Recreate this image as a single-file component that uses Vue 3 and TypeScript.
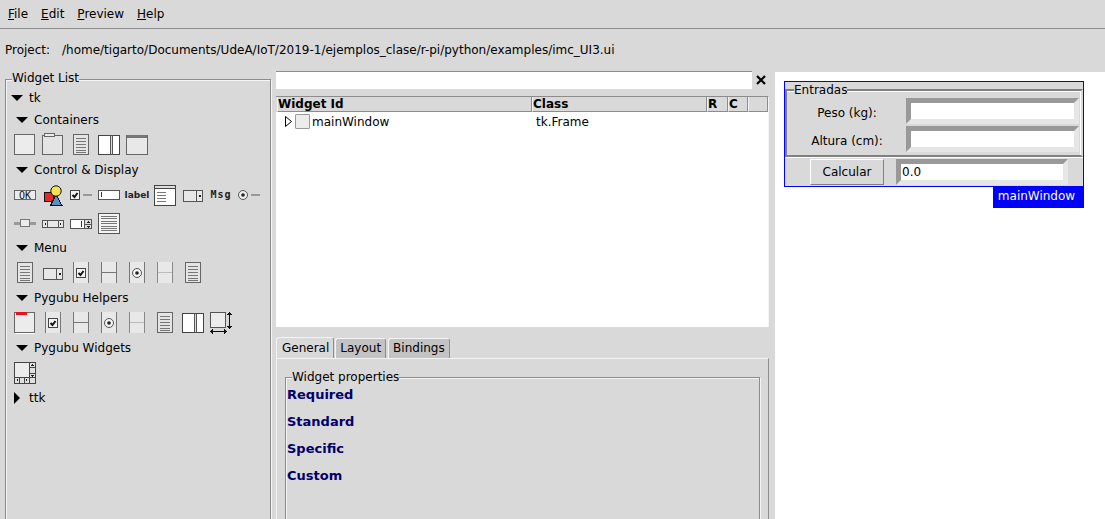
<template>
  <div class="app">
    <svg class="defs" aria-hidden="true">
      <defs>
        <symbol id="i-frame" viewBox="0 0 28 28">
          <rect x="3.5" y="4.5" width="20" height="20" rx="1" fill="#ececec" stroke="#666" />
        </symbol>
        <symbol id="i-labelframe" viewBox="0 0 28 28">
          <rect x="3.5" y="5.5" width="20" height="19" rx="1" fill="#e4e4e4" stroke="#666" />
          <rect x="5.5" y="3.5" width="10" height="3" fill="#ececec" stroke="#666" />
        </symbol>
        <symbol id="i-list" viewBox="0 0 28 28">
          <rect x="6.5" y="4.5" width="15" height="20" rx="1" fill="#e4e4e4" stroke="#666" />
          <path d="M9 8.5h10M9 11.5h10M9 14.5h10M9 17.5h10M9 20.5h10M9 22.5h10" stroke="#777" />
        </symbol>
        <symbol id="i-paned" viewBox="0 0 28 28">
          <rect x="3.5" y="5.5" width="21" height="19" rx="1" fill="#fff" stroke="#444" />
          <rect x="15" y="6" width="3" height="18" fill="#ddd" />
          <path d="M15.5 5v20M17.5 5v20" stroke="#555" />
        </symbol>
        <symbol id="i-toplevel" viewBox="0 0 28 28">
          <rect x="3.5" y="5.5" width="21" height="19" rx="1" fill="#e8e8e8" stroke="#666" />
          <rect x="4" y="5" width="20" height="3" fill="#777" />
        </symbol>
        <symbol id="i-button" viewBox="0 0 28 28">
          <rect x="3.5" y="10.5" width="21" height="9" rx="1" fill="#ececec" stroke="#666" />
          <text x="14" y="18.5" text-anchor="middle" class="glyph-mono">OK</text>
        </symbol>
        <symbol id="i-canvas" viewBox="0 0 28 28">
          <rect x="5.5" y="12.5" width="9" height="9" fill="#e8262a" stroke="#111" />
          <path d="M17 14.5L11.5 25.5H23Z" fill="#5f8fc0" stroke="#111" />
          <circle cx="17" cy="11" r="5.2" fill="#f5e34a" stroke="#111" class="round" />
        </symbol>
        <symbol id="i-check" viewBox="0 0 28 28">
          <rect x="3.5" y="10.5" width="9" height="9" rx="1" fill="#f2f2f2" stroke="#444" />
          <path d="M5.5 15l2 2 3-4" fill="none" stroke="#111" stroke-width="2" class="round" />
          <path d="M16 15h9" stroke="#999" stroke-width="2" />
        </symbol>
        <symbol id="i-entry" viewBox="0 0 28 28">
          <rect x="3.5" y="10.5" width="21" height="9" rx="1" fill="#fff" stroke="#555" />
          <path d="M6.5 12v5" stroke="#333" />
        </symbol>
        <symbol id="i-label" viewBox="0 0 28 28">
          <text x="14" y="18" text-anchor="middle" class="glyph-label">label</text>
        </symbol>
        <symbol id="i-text" viewBox="0 0 28 28">
          <rect x="3.5" y="5.5" width="21" height="20" rx="1" fill="#fff" stroke="#444" />
          <path d="M4 8.5h20" stroke="#444" />
          <rect x="4" y="6" width="20" height="2" fill="#ddd" />
          <path d="M6 12.5h9M6 15.5h9M6 18.5h9M6 21.5h9" stroke="#777" />
        </symbol>
        <symbol id="i-menubutton" viewBox="0 0 28 28">
          <rect x="4.5" y="10.5" width="19" height="11" rx="1" fill="#e8e8e8" stroke="#555" />
          <path d="M17.5 11v10" stroke="#555" />
          <rect x="20" y="15" width="2" height="2" fill="#222" />
        </symbol>
        <symbol id="i-msg" viewBox="0 0 28 28">
          <text x="14" y="18" text-anchor="middle" class="glyph-msg">Msg</text>
        </symbol>
        <symbol id="i-radio" viewBox="0 0 28 28">
          <circle cx="8" cy="15" r="4.5" fill="#eee" stroke="#555" class="round" />
          <circle cx="8" cy="15" r="1.8" fill="#222" class="round" />
          <path d="M16 15h9" stroke="#999" stroke-width="2" />
        </symbol>
        <symbol id="i-scale" viewBox="0 0 28 28">
          <path d="M3 15h22" stroke="#999" stroke-width="3" />
          <rect x="9.5" y="11.5" width="9" height="7" rx="1" fill="#ececec" stroke="#777" />
        </symbol>
        <symbol id="i-scrollbar" viewBox="0 0 28 28">
          <rect x="3.5" y="12.5" width="21" height="7" rx="1" fill="#e8e8e8" stroke="#555" />
          <path d="M8.5 13v6M19.5 13v6" stroke="#555" />
          <path d="M7 14.5v3L5.5 16ZM21 14.5v3L22.5 16Z" fill="#222" />
        </symbol>
        <symbol id="i-spinbox" viewBox="0 0 28 28">
          <rect x="3.5" y="11.5" width="21" height="9" rx="1" fill="#fff" stroke="#555" />
          <rect x="17" y="12" width="7" height="8" fill="#ddd" />
          <path d="M14.5 13v6" stroke="#333" />
          <path d="M17.5 12v8M18 16.5h6" stroke="#555" />
          <path d="M19 15h4l-2-2ZM19 18h4l-2 2Z" fill="#222" />
        </symbol>
        <symbol id="i-textlines" viewBox="0 0 28 28">
          <rect x="3.5" y="5.5" width="21" height="20" rx="1" fill="#f4f4f4" stroke="#555" />
          <path d="M6 8.5h16M6 10.5h16M6 13.5h16M6 15.5h16M6 18.5h16M6 20.5h16M6 22.5h16" stroke="#777" />
        </symbol>
        <symbol id="i-menucheck" viewBox="0 0 28 28">
          <rect x="6" y="4" width="16" height="21" fill="#e8e8e8" />
          <path d="M6.5 4v21M21.5 4v21" stroke="#777" />
          <rect x="9.5" y="10.5" width="9" height="9" rx="1" fill="#f4f4f4" stroke="#444" />
          <path d="M11.5 15l2 2 3-4" fill="none" stroke="#111" stroke-width="2" class="round" />
        </symbol>
        <symbol id="i-menusep" viewBox="0 0 28 28">
          <rect x="6" y="4" width="16" height="21" fill="#e8e8e8" />
          <path d="M6.5 4v21M21.5 4v21" stroke="#777" />
          <path d="M7 14.5h14" stroke="#777" />
        </symbol>
        <symbol id="i-menuradio" viewBox="0 0 28 28">
          <rect x="6" y="4" width="16" height="21" fill="#e8e8e8" />
          <path d="M6.5 4v21M21.5 4v21" stroke="#777" />
          <circle cx="14" cy="15" r="4.5" fill="#f4f4f4" stroke="#555" class="round" />
          <circle cx="14" cy="15" r="1.8" fill="#222" class="round" />
        </symbol>
        <symbol id="i-menusep2" viewBox="0 0 28 28">
          <rect x="6" y="4" width="16" height="21" fill="#e8e8e8" />
          <path d="M6.5 4v21M21.5 4v21" stroke="#888" />
          <path d="M7 14.5h14" stroke="#bbb" />
        </symbol>
        <symbol id="i-redframe" viewBox="0 0 28 28">
          <rect x="3.5" y="4.5" width="20" height="20" rx="1" fill="#ececec" stroke="#666" />
          <path d="M4 25.5h20" stroke="#fff" />
          <rect x="5" y="4" width="11" height="3" fill="#e8121c" />
        </symbol>
        <symbol id="i-sizegrip" viewBox="0 0 28 28">
          <rect x="3.5" y="4.5" width="15" height="15" rx="1" fill="#ececec" stroke="#555" />
          <path d="M22.5 5v15M20.5 7l2-2 2 2M20.5 18l2 2 2-2M4 23.5h15M6 21.5l-2 2 2 2M17 21.5l2 2-2 2" fill="none" stroke="#111" />
        </symbol>
        <symbol id="i-scrolled" viewBox="0 0 28 28">
          <rect x="3.5" y="4.5" width="21" height="21" fill="#ececec" stroke="#444" />
          <rect x="18" y="5" width="6" height="20" fill="#e0e0e0" />
          <rect x="4" y="19" width="20" height="6" fill="#e0e0e0" />
          <path d="M18.5 5v20M4 19.5h20M18 9.5h6M18 15.5h6M8.5 20v5M13.5 20v5" stroke="#444" />
          <path d="M19.5 8h4l-2-2ZM19.5 17h4l-2 2ZM7 20.5v3L5 22ZM15 20.5v3L17 22Z" fill="#222" />
        </symbol>
      </defs>
    </svg>

    <nav class="menubar">
      <span v-for="item in menus" :key="item" class="menu-item"><u>{{ item[0] }}</u>{{ item.slice(1) }}</span>
    </nav>

    <div class="project">
      <span class="project-label">Project:</span>
      <span>/home/tigarto/Documents/UdeA/IoT/2019-1/ejemplos_clase/r-pi/python/examples/imc_UI3.ui</span>
    </div>

    <main class="workspace">
      <fieldset class="groove widget-list">
        <legend>Widget List</legend>
        <div class="section top"><i class="arrow-down"></i>tk</div>
        <template v-for="group in palette" :key="group.label">
          <div class="section sub"><i class="arrow-down"></i>{{ group.label }}</div>
          <div v-for="(row, r) in group.rows" :key="r" class="icon-row">
            <svg v-for="(icon, n) in row" :key="n" class="icon" width="28" height="28">
              <use :href="`#i-${icon}`" />
            </svg>
          </div>
        </template>
        <div class="section top last"><i class="arrow-right"></i>ttk</div>
      </fieldset>

      <section class="center">
        <div class="search">
          <input class="search-input" type="text" />
          <svg class="close" width="10" height="10" viewBox="0 0 10 10">
            <path d="M1 1l8 8M9 1l-8 8" stroke="#000" stroke-width="2.2" />
          </svg>
        </div>

        <div class="tree">
          <div class="tree-head">
            <span v-for="col in columns" :key="col" class="tree-col">{{ col }}</span>
          </div>
          <div class="tree-row">
            <svg class="tree-toggle" width="7" height="11" viewBox="0 0 7 11">
              <path d="M.5.5v10l6-5Z" fill="#fff" stroke="#000" />
            </svg>
            <span class="tree-icon"></span>
            <span class="tree-id">mainWindow</span>
            <span>tk.Frame</span>
          </div>
        </div>

        <div class="tabs">
          <span v-for="(tab, t) in tabs" :key="tab" class="tab" :class="{ active: t === 0 }">{{ tab }}</span>
        </div>
        <div class="pane">
          <fieldset class="groove props">
            <legend>Widget properties</legend>
            <div v-for="name in propGroups" :key="name" class="prop-group">{{ name }}</div>
          </fieldset>
        </div>
      </section>

      <section class="canvas">
        <div class="preview-wrap">
          <div class="preview">
            <fieldset class="entradas">
              <legend>Entradas</legend>
              <div class="form-grid">
                <label class="form-label">Peso (kg):</label>
                <input class="tk-entry" type="text" />
                <label class="form-label">Altura (cm):</label>
                <input class="tk-entry" type="text" />
              </div>
            </fieldset>
            <div class="calc-row">
              <button class="calc-btn" type="button">Calcular</button>
              <input class="tk-entry result" type="text" value="0.0" />
            </div>
          </div>
          <div class="preview-tag">mainWindow</div>
        </div>
      </section>
    </main>
  </div>
</template>

<script setup lang="ts">
interface PaletteGroup {
  label: string;
  rows: string[][];
}

const menus = ['File', 'Edit', 'Preview', 'Help'];
const columns = ['Widget Id', 'Class', 'R', 'C', ''];
const tabs = ['General', 'Layout', 'Bindings'];
const propGroups = ['Required', 'Standard', 'Specific', 'Custom'];

const palette: PaletteGroup[] = [
  { label: 'Containers', rows: [['frame', 'labelframe', 'list', 'paned', 'toplevel']] },
  {
    label: 'Control & Display',
    rows: [
      ['button', 'canvas', 'check', 'entry', 'label', 'text', 'menubutton', 'msg', 'radio'],
      ['scale', 'scrollbar', 'spinbox', 'textlines'],
    ],
  },
  { label: 'Menu', rows: [['list', 'menubutton', 'menucheck', 'menusep', 'menuradio', 'menusep2', 'list']] },
  {
    label: 'Pygubu Helpers',
    rows: [['redframe', 'menucheck', 'menusep', 'menuradio', 'menusep2', 'list', 'paned', 'sizegrip']],
  },
  { label: 'Pygubu Widgets', rows: [['scrolled']] },
];
</script>

<style>
html,
body {
  margin: 0;
  overflow: hidden;
}
</style>

<style scoped>
.app {
  display: flex;
  flex-direction: column;
  height: 100vh;
  overflow: hidden;
  background: #d9d9d9;
  color: #000;
  font-family: "DejaVu Sans", sans-serif;
  font-size: 12px;
}

.defs {
  display: none;
}

.menubar {
  display: flex;
  flex: none;
  gap: 13px;
  align-items: center;
  height: 27px;
  padding: 0 0 1px 8px;
  border-bottom: 1px solid #8c8c8c;
  box-sizing: content-box;
}

.project {
  display: flex;
  flex: none;
  align-items: center;
  height: 42px;
  padding-left: 5px;
}

.project-label {
  width: 57px;
}

.workspace {
  display: flex;
  flex: 1;
  min-height: 0;
}

.groove {
  margin: 0;
  padding: 0;
  min-width: 0;
  border: 1px solid #8c8c8c;
  box-shadow: inset 1px 1px 0 #f4f4f4, 1px 1px 0 #f4f4f4;
}

.groove legend {
  margin-left: 6px;
  padding: 0;
  line-height: 16px;
  background: #d9d9d9;
}

.widget-list {
  flex: none;
  box-sizing: border-box;
  width: 266px;
  height: 600px;
  margin-left: 5px;
  padding-left: 5px;
}

.widget-list legend {
  position: relative;
  top: -1px;
  margin-left: 1px;
}

.section {
  display: flex;
  box-sizing: border-box;
  align-items: center;
  height: 22px;
  padding-top: 2px;
}

.section.top {
  height: 21px;
  padding-top: 0;
}

.section.top.last {
  height: 22px;
  padding-top: 2px;
}

.section.sub {
  padding-left: 5px;
}

.arrow-down {
  width: 0;
  height: 0;
  margin-right: 6px;
  border-top: 6px solid #000;
  border-right: 6px solid transparent;
  border-left: 6px solid transparent;
}

.arrow-right {
  width: 0;
  height: 0;
  margin-right: 9px;
  margin-left: 3px;
  border-top: 6px solid transparent;
  border-bottom: 6px solid transparent;
  border-left: 6px solid #000;
}

.icon-row {
  display: flex;
  height: 28px;
}

.icon {
  flex: none;
  shape-rendering: crispEdges;
}

.round {
  shape-rendering: auto;
}

.glyph-mono {
  font-family: "DejaVu Sans Mono", monospace;
  font-size: 10px;
  fill: #111;
}

.glyph-label {
  font-family: "DejaVu Sans", sans-serif;
  font-size: 9px;
  font-weight: 700;
  fill: #222;
}

.glyph-msg {
  font-family: "DejaVu Sans Mono", monospace;
  font-size: 10px;
  font-weight: 700;
  letter-spacing: 1px;
  fill: #222;
}

.center {
  display: flex;
  flex: none;
  flex-direction: column;
  width: 493px;
  margin-left: 5px;
}

.search {
  display: flex;
  flex: none;
  align-items: center;
  height: 18px;
  margin-bottom: 7px;
}

.search-input {
  box-sizing: border-box;
  width: 476px;
  height: 18px;
  padding: 0;
  border: 0;
  border-top: 1px solid #8c8c8c;
  background: #fff;
  outline: none;
}

.close {
  margin-left: 4px;
}

.tree {
  flex: none;
  box-sizing: border-box;
  height: 231px;
  border-top: 1px solid #8c8c8c;
  border-right: 1px solid #f4f4f4;
  background: #fff;
}

.tree-head {
  display: grid;
  grid-template-columns: 255px 175px 21px 20px 20px;
  height: 15px;
  padding-left: 1px;
  background: #d9d9d9;
}

.tree-col {
  box-sizing: border-box;
  overflow: hidden;
  border-right: 1px solid #8c8c8c;
  border-bottom: 1px solid #8c8c8c;
  border-left: 1px solid #f4f4f4;
  font-weight: 700;
  line-height: 14px;
}

.tree-row {
  display: flex;
  align-items: center;
  height: 19px;
  padding-left: 9px;
}

.tree-toggle {
  margin-right: 3px;
}

.tree-icon {
  flex: none;
  box-sizing: border-box;
  width: 15px;
  height: 15px;
  margin-right: 2px;
  border: 1px solid #999;
  border-radius: 1px;
  background: #ececec;
}

.tree-id {
  width: 224px;
}

.tabs {
  display: flex;
  flex: none;
  gap: 1px;
  align-items: flex-end;
  height: 21px;
  margin-top: 10px;
}

.tab {
  box-sizing: border-box;
  height: 20px;
  padding: 0 4px;
  border: 1px solid #8c8c8c;
  border-bottom: 0;
  border-top-color: #f4f4f4;
  border-left-color: #f4f4f4;
  border-radius: 3px 3px 0 0;
  background: #c3c3c3;
  line-height: 18px;
}

.tab.active {
  height: 21px;
  padding: 0 4px 0 5px;
  background: #d9d9d9;
  line-height: 20px;
}

.tab + .tab + .tab {
  margin-left: 1px;
}

.pane {
  flex: 1;
  box-sizing: border-box;
  height: 300px;
  padding: 10px 8px 0;
  border: 1px solid #8c8c8c;
  border-top-color: #f4f4f4;
  border-left-color: #f4f4f4;
}

.props {
  height: 300px;
  padding: 1px 0 0 1px;
}

.props legend {
  margin-left: 5px;
}

.prop-group {
  margin-bottom: 9px;
  color: #00006b;
  font-size: 13px;
  font-weight: 700;
  line-height: 18px;
}

.canvas {
  flex: 1;
  margin-top: 1px;
  margin-left: 6px;
  padding: 9px 0 0 9px;
  background: #fff;
}

.preview-wrap {
  display: flex;
  flex-direction: column;
  width: 300px;
}

.preview {
  box-sizing: border-box;
  height: 106px;
  border: 1px solid #00f;
  background: #d9d9d9;
}

.entradas {
  box-sizing: border-box;
  height: 75px;
  margin: 0;
  padding: 0;
  min-width: 0;
  border: 2px solid #808080;
  border-right-color: #d9d9d9;
  box-shadow: 0 1px 0 #fff, inset -1px 1px 0 #fff;
}

.entradas legend {
  position: relative;
  top: 1px;
  margin-left: 7px;
  padding: 0;
  line-height: 15px;
  background: #d9d9d9;
}

.form-grid {
  display: grid;
  grid-template-columns: 119px 173px;
  grid-auto-rows: 26px;
  row-gap: 2px;
  align-items: center;
  padding-top: 1px;
}

.form-label {
  padding: 4px 0 0 1px;
  text-align: center;
}

.tk-entry {
  box-sizing: border-box;
  width: 100%;
  height: 26px;
  padding: 0;
  border-width: 5px;
  border-style: solid;
  border-color: #999 #e6e6e6 #e6e6e6 #999;
  background: #fff;
  color: #000;
  font: inherit;
  outline: none;
}

.calc-row {
  display: flex;
  gap: 12px;
  padding: 2px 0 0 25px;
}

.calc-btn {
  box-sizing: border-box;
  width: 74px;
  height: 26px;
  padding: 0;
  border: 1px solid;
  border-color: #fff #808080 #808080 #fff;
  background: #d9d9d9;
  color: #000;
  font: inherit;
}

.result {
  width: 172px;
  padding-left: 1px;
}

.preview-tag {
  box-sizing: border-box;
  align-self: flex-end;
  width: 91px;
  height: 21px;
  padding-right: 4px;
  background: #00f;
  color: #fff;
  line-height: 18px;
  text-align: center;
}
</style>
